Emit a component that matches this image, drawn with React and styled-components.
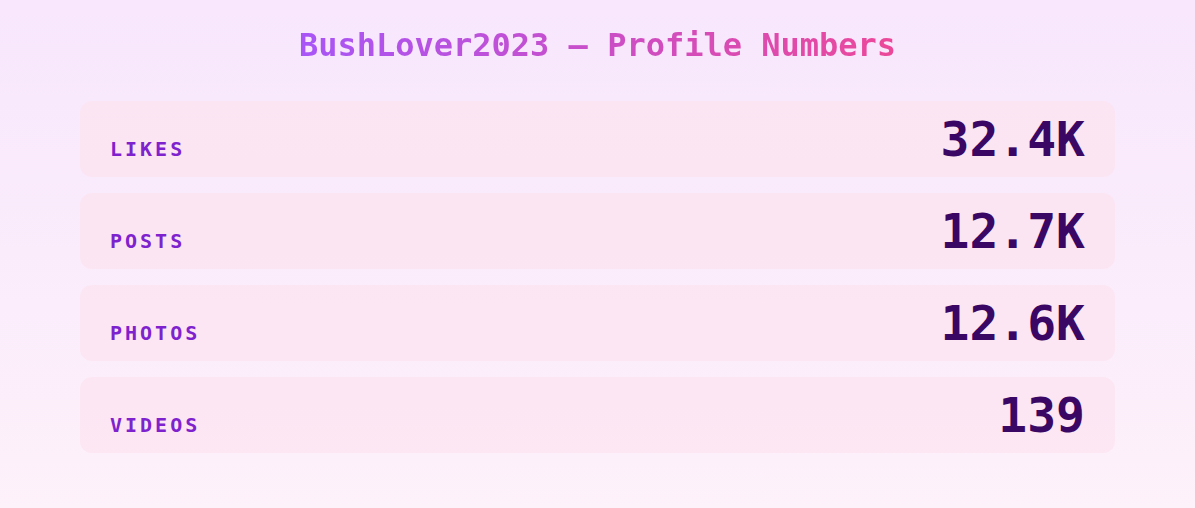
import React from "react";
import styled, { createGlobalStyle } from "styled-components";

const Global = createGlobalStyle`
  html, body { margin: 0; padding: 0; }
  body {
    min-height: 508px;
    background: linear-gradient(180deg, #f8e7fd 0%, #fdf1fa 100%);
    font-family: "DejaVu Sans Mono", "Liberation Mono", monospace;
  }
`;

const Page = styled.main`
  min-height: 508px;
  box-sizing: border-box;
  padding: 27px 80px 0;
  display: flex;
  flex-direction: column;
`;

const Title = styled.h1`
  margin: 0 0 37px;
  text-align: center;
  font-size: 32px;
  font-weight: bold;
  line-height: 37px;
  span {
    background: linear-gradient(90deg, #a855f7, #ec4899);
    -webkit-background-clip: text;
    background-clip: text;
    color: transparent;
  }
`;

const List = styled.div`
  display: flex;
  flex-direction: column;
  gap: 16px;
`;

const Card = styled.div`
  display: flex;
  align-items: baseline;
  justify-content: space-between;
  padding: 14px 30px;
  border-radius: 12px;
  background: rgba(252, 226, 240, 0.7);
`;

const Label = styled.span`
  font-size: 20px;
  font-weight: bold;
  letter-spacing: 3px;
  text-transform: uppercase;
  color: #7e22ce;
`;

const Value = styled.span`
  font-size: 48px;
  line-height: 1;
  font-weight: bold;
  color: #3b0764;
`;

const stats = [
  { label: "Likes", value: "32.4K" },
  { label: "Posts", value: "12.7K" },
  { label: "Photos", value: "12.6K" },
  { label: "Videos", value: "139" },
];

export default function App() {
  return (
    <>
      <Global />
      <Page>
        <Title>
          <span>BushLover2023 — Profile Numbers</span>
        </Title>
        <List>
          {stats.map((s) => (
            <Card key={s.label}>
              <Label>{s.label}</Label>
              <Value>{s.value}</Value>
            </Card>
          ))}
        </List>
      </Page>
    </>
  );
}
